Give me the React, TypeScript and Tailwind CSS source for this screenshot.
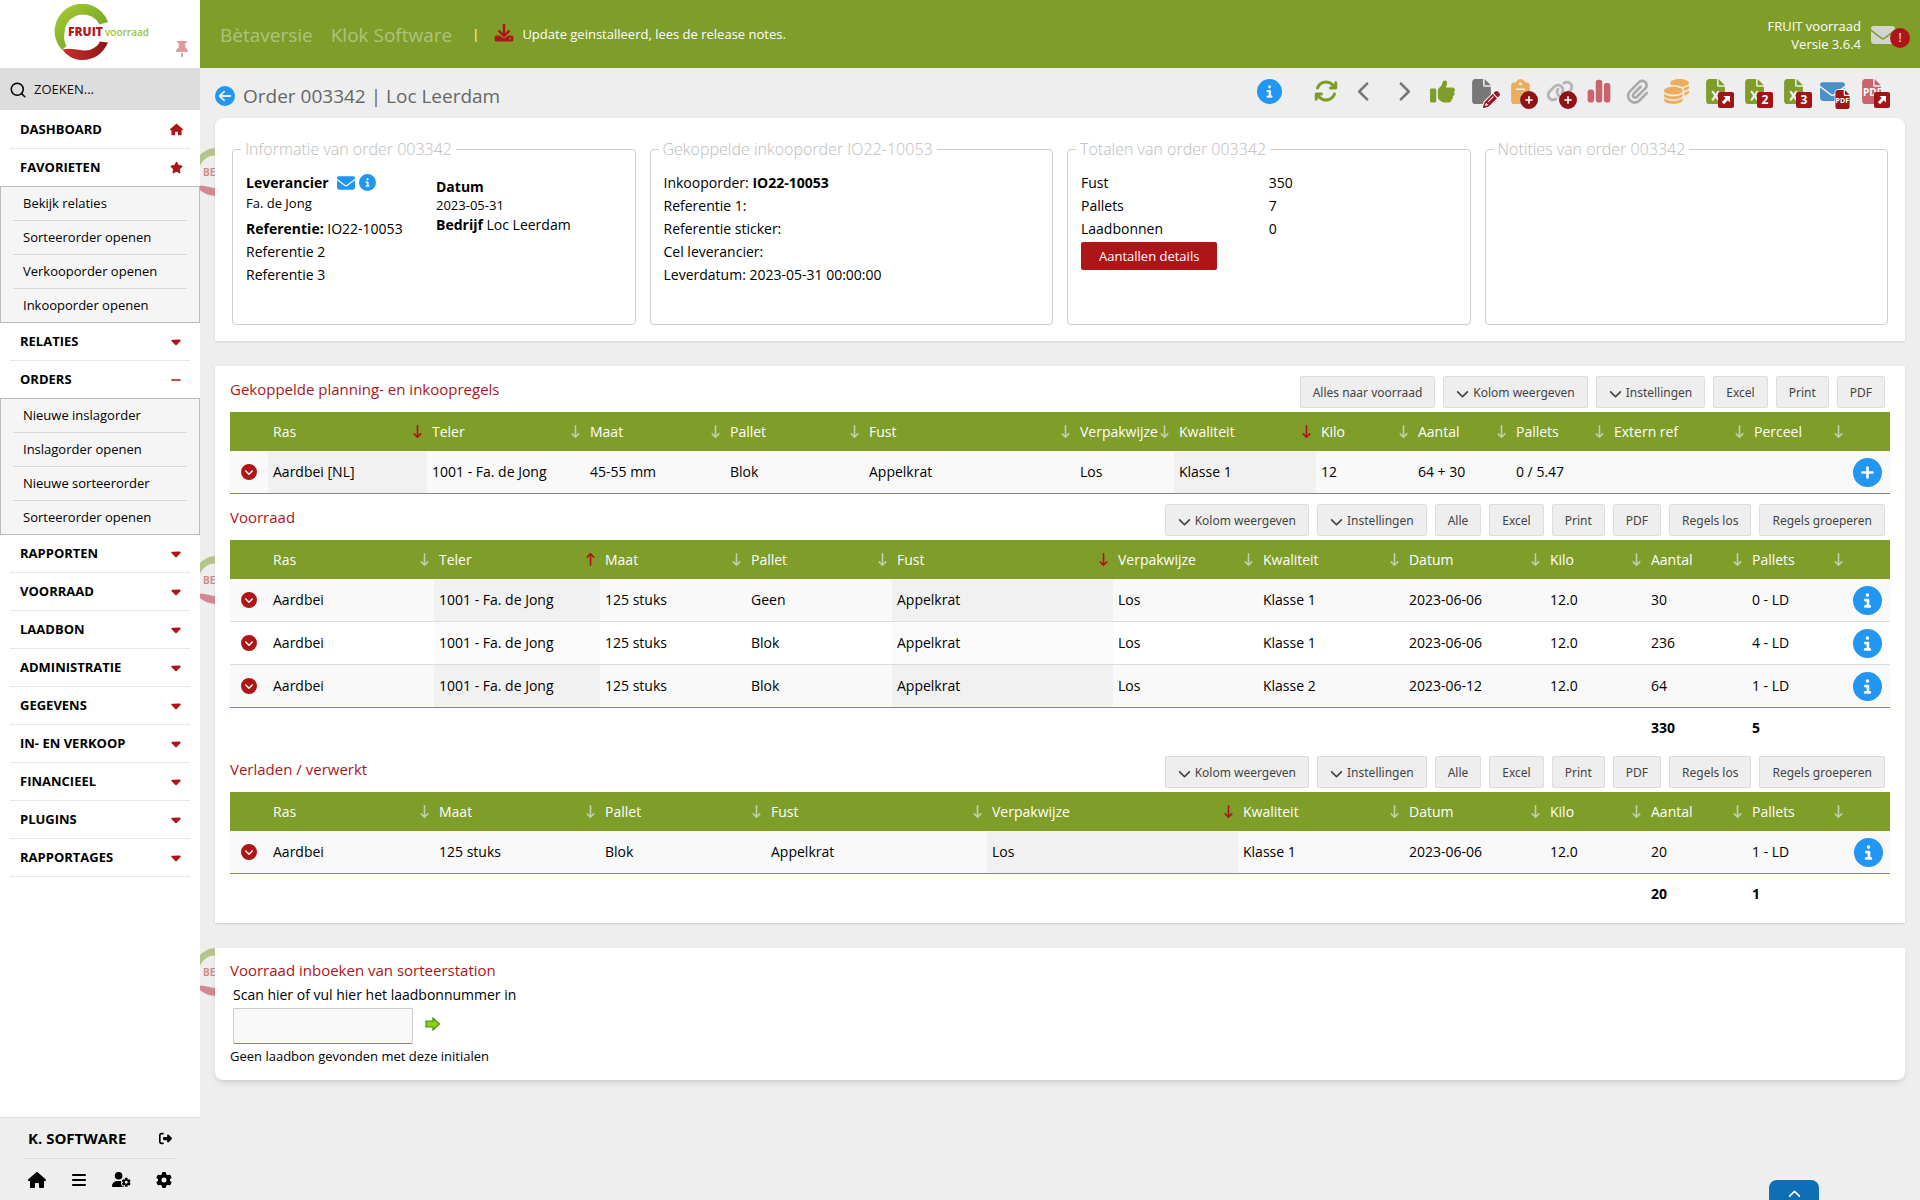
import { ReactNode } from 'react';
import clsx from 'clsx';
import { Search } from 'lucide-react';
import {
  FaArrowDownLong,
  FaArrowUpLong,
  FaArrowsRotate,
  FaBars,
  FaCaretDown,
  FaChartSimple,
  FaChevronDown,
  FaChevronLeft,
  FaChevronRight,
  FaChevronUp,
  FaCircleArrowLeft,
  FaCircleChevronDown,
  FaCircleInfo,
  FaCirclePlus,
  FaClipboard,
  FaCoins,
  FaEnvelope,
  FaFile,
  FaFileExcel,
  FaGear,
  FaHouse,
  FaLink,
  FaMinus,
  FaPaperclip,
  FaPencil,
  FaRightFromBracket,
  FaStar,
  FaThumbsUp,
  FaThumbtack,
  FaUserGear,
} from 'react-icons/fa6';

type MenuItem = {
  label: string;
  icon?: ReactNode;
  children?: string[];
};

type Column = {
  label: string;
  width: number;
  sort?: 'asc' | 'desc';
};

type OrderTableProps = {
  columns: Column[];
  rows: string[][];
  totals?: string[];
  action: 'info' | 'plus';
};

const MENU: MenuItem[] = [
  { label: 'DASHBOARD', icon: <FaHouse size={13} /> },
  {
    label: 'FAVORIETEN',
    icon: <FaStar size={13} />,
    children: ['Bekijk relaties', 'Sorteerorder openen', 'Verkooporder openen', 'Inkooporder openen'],
  },
  { label: 'RELATIES' },
  {
    label: 'ORDERS',
    icon: <FaMinus size={12} />,
    children: ['Nieuwe inslagorder', 'Inslagorder openen', 'Nieuwe sorteerorder', 'Sorteerorder openen'],
  },
  { label: 'RAPPORTEN' },
  { label: 'VOORRAAD' },
  { label: 'LAADBON' },
  { label: 'ADMINISTRATIE' },
  { label: 'GEGEVENS' },
  { label: 'IN- EN VERKOOP' },
  { label: 'FINANCIEEL' },
  { label: 'PLUGINS' },
  { label: 'RAPPORTAGES' },
];

const PLANNING_COLUMNS: Column[] = [
  { label: 'Ras', width: 159, sort: 'desc' },
  { label: 'Teler', width: 158 },
  { label: 'Maat', width: 140 },
  { label: 'Pallet', width: 139 },
  { label: 'Fust', width: 211 },
  { label: 'Verpakwijze', width: 99 },
  { label: 'Kwaliteit', width: 142, sort: 'desc' },
  { label: 'Kilo', width: 97 },
  { label: 'Aantal', width: 98 },
  { label: 'Pallets', width: 98 },
  { label: 'Extern ref', width: 140 },
  { label: 'Perceel', width: 99 },
];

const STOCK_COLUMNS: Column[] = [
  { label: 'Ras', width: 166 },
  { label: 'Teler', width: 166, sort: 'asc' },
  { label: 'Maat', width: 146 },
  { label: 'Pallet', width: 146 },
  { label: 'Fust', width: 221, sort: 'desc' },
  { label: 'Verpakwijze', width: 145 },
  { label: 'Kwaliteit', width: 146 },
  { label: 'Datum', width: 141 },
  { label: 'Kilo', width: 101 },
  { label: 'Aantal', width: 101 },
  { label: 'Pallets', width: 101 },
];

const LOADED_COLUMNS: Column[] = [
  { label: 'Ras', width: 166 },
  { label: 'Maat', width: 166 },
  { label: 'Pallet', width: 166 },
  { label: 'Fust', width: 221 },
  { label: 'Verpakwijze', width: 251, sort: 'desc' },
  { label: 'Kwaliteit', width: 166 },
  { label: 'Datum', width: 141 },
  { label: 'Kilo', width: 101 },
  { label: 'Aantal', width: 101 },
  { label: 'Pallets', width: 101 },
];

const STOCK_BUTTONS = ['Kolom weergeven', 'Instellingen', 'Alle', 'Excel', 'Print', 'PDF', 'Regels los', 'Regels groeperen'];

const Logo = () => (
  <svg width="98" height="58" viewBox="0 0 98 58" role="img" aria-label="FRUIT voorraad">
    <defs>
      <linearGradient id="leaf" x1="0" y1="0" x2="1" y2="1">
        <stop offset="0" stopColor="#a9cf35" />
        <stop offset="0.5" stopColor="#86b32a" />
        <stop offset="1" stopColor="#6f9a25" />
      </linearGradient>
      <linearGradient id="berry" x1="0" y1="0" x2="1" y2="0">
        <stop offset="0" stopColor="#c8332c" />
        <stop offset="1" stopColor="#8f1418" />
      </linearGradient>
    </defs>
    <path
      d="M8 46A27.500 27.500 0 1 1 54 18L45.500 20.500A18.500 18.500 0 0 0 11 25C9.500 32 10 38 12.500 42Z"
      fill="url(#leaf)"
    />
    <path d="M8.500 45.500C16 43.500 23 46 30 46.500C38 47 44 42 46 37.500L54 38.500C49 50 39 56.500 27 56C19 55.500 12 51 8.500 45.500Z" fill="url(#berry)" />
    <text x="14" y="32" className="font-['Open_Sans',sans-serif] text-[12px] font-extrabold" fill="#b3151b">
      FRUIT
    </text>
    <text x="51" y="32" className="font-['Open_Sans',sans-serif] text-[10px] font-semibold" fill="#9cc52f">
      voorraad
    </text>
  </svg>
);

// Faded ring that sticks out from behind a card
const BetaMark = ({ className }: { className: string }) => (
  <svg
    className={clsx('absolute -left-[23px] opacity-50', className)}
    width="48"
    height="48"
    viewBox="0 0 48 48"
    aria-hidden="true"
  >
    <path d="M4 36C-4 18 8 0 24 0C34 0 42 6 45 14L38 17C34 7 20 4 12 12C6 18 5 28 8 34Z" fill="#7e9d29" />
    <path d="M4 38C12 36 18 40 24 40C31 40 36 36 38 32L46 34C42 44 34 48 24 48C16 48 8 44 4 38Z" fill="#b5283a" />
    <text x="11" y="28" className="font-['Open_Sans',sans-serif] text-[10px] font-bold" fill="#b5283a">
      BETA
    </text>
  </svg>
);

const UpdateIcon = ({ className }: { className?: string }) => (
  <svg className={className} width="20" height="20" viewBox="0 0 20 20" aria-hidden="true">
    <path d="M3 12.500H5.500L10 15.500L14.500 12.500H17A2.500 2.500 0 0 1 19.500 15V16.500A2 2 0 0 1 17.500 18.500H2.500A2 2 0 0 1 .5 16.500V15A2.500 2.500 0 0 1 3 12.500Z" fill="currentColor" />
    <path d="M10 .8V12M4.500 7.500L10 13L15.500 7.500" fill="none" stroke="currentColor" strokeWidth="2.400" />
    <circle cx="16" cy="15.500" r=".9" fill="#7e9d29" />
  </svg>
);

const Sidebar = () => (
  <aside className="flex w-[200px] shrink-0 flex-col bg-white text-[13px]">
    <div className="relative h-[68px] pt-[4px] pl-[54px]">
      <Logo />
      <button className="absolute right-[10px] bottom-[11px] text-[#e19aa0]" aria-label="Menu vastzetten">
        <FaThumbtack size={16} />
      </button>
    </div>

    <label className="flex h-[42px] items-center gap-[7px] bg-[#ddd] px-[9px] pt-px">
      <Search size={18} strokeWidth={2} className="shrink-0" aria-hidden="true" />
      <input
        type="search"
        aria-label="Zoeken"
        placeholder="ZOEKEN..."
        className="w-full min-w-0 bg-transparent outline-none placeholder:text-[#111]"
      />
    </label>

    <nav className="pt-px">
      {MENU.map(({ label, icon, children }) => (
        <div key={label}>
          <div className="px-[10px]">
            <button
              className={clsx(
                'flex h-[38px] w-full items-center justify-between border-b pr-[7px] pl-[10px] font-bold',
                children ? 'border-transparent' : 'border-[#e8e8e8]',
              )}
            >
              {label}
              <span className="flex w-[14px] justify-center text-[#ae1518]">{icon ?? <FaCaretDown size={15} />}</span>
            </button>
          </div>
          {children && (
            <ul className="-mt-px border border-[#bbb] bg-[#f5f5f5] px-3">
              {children.map((child) => (
                <li key={child} className="border-b border-[#d9d9d9] last:border-b-0">
                  <a href="#" className="flex h-[33px] items-center pl-[10px]">
                    {child}
                  </a>
                </li>
              ))}
            </ul>
          )}
        </div>
      ))}
    </nav>

    <div className="mt-auto border-t border-[#ddd] bg-[#eee] px-[23px]">
      <div className="flex h-[41px] items-center justify-between border-b border-[#ddd] px-[5px] text-[15px] font-bold">
        K. SOFTWARE
        <button aria-label="Uitloggen">
          <FaRightFromBracket size={13} />
        </button>
      </div>
      <div className="flex h-[41px] items-center justify-between px-[5px]">
        <button aria-label="Home">
          <FaHouse size={18} />
        </button>
        <button aria-label="Menu">
          <FaBars size={16} />
        </button>
        <button aria-label="Gebruikers">
          <FaUserGear size={19} />
        </button>
        <button aria-label="Instellingen">
          <FaGear size={16} />
        </button>
      </div>
    </div>
  </aside>
);

const Header = () => (
  <header className="flex h-[68px] items-center bg-[#7e9d29] pt-[2px] pr-[10px] pl-5 text-[13px] text-white">
    <div className="flex items-center gap-[18px] text-[19px] text-white/40">
      <span>Bètaversie</span>
      <span>Klok Software</span>
    </div>
    <span className="ml-5">|</span>
    <UpdateIcon className="mb-1 ml-[15px] text-[#ae1518]" />
    <a href="#" className="ml-2">
      Update geinstalleerd, lees de release notes.
    </a>
    <div className="ml-auto text-right leading-[18px]">
      <p>FRUIT voorraad</p>
      <p>Versie 3.6.4</p>
    </div>
    <button className="relative ml-[10px] w-[39px] text-[#d3d3d3]" aria-label="Berichten">
      <FaEnvelope size={24} />
      <span className="absolute top-[5px] right-0 flex size-5 items-center justify-center rounded-full bg-[#ae1518] text-[12px] text-white">
        !
      </span>
    </button>
  </header>
);

const ToolButton = ({ label, className, children }: { label: string; className?: string; children: ReactNode }) => (
  <button aria-label={label} className={clsx('relative flex h-[26px] w-[39px] items-center justify-center', className)}>
    {children}
  </button>
);

const SquareBadge = ({ children }: { children: ReactNode }) => (
  <span className="absolute top-[14px] right-[1px] flex size-4 items-center justify-center rounded-xs bg-[#a01416] text-[12px] leading-none font-bold text-white">
    {children}
  </span>
);

const PlusBadge = () => (
  <span className="absolute top-[13px] right-[2px] flex size-[18px] items-center justify-center rounded-full bg-white">
    <FaCirclePlus size={18} className="text-[#8f1418]" />
  </span>
);

const DiagonalArrow = () => (
  <svg width="10" height="10" viewBox="0 0 10 10" fill="currentColor" aria-hidden="true">
    <path d="M2.500 1H9V7.500L6.800 5.300L3 9.200L.9 7.100L4.700 3.200Z" />
  </svg>
);

const Toolbar = () => (
  <div className="flex items-center pb-1">
    <ToolButton label="Informatie" className="mr-[17px] text-[#2196f3]">
      <FaCircleInfo size={25} />
    </ToolButton>
    <ToolButton label="Verversen" className="text-[#7e9d29]">
      <FaArrowsRotate size={24} />
    </ToolButton>
    <ToolButton label="Vorige" className="text-[#777]">
      <FaChevronLeft size={21} />
    </ToolButton>
    <ToolButton label="Volgende" className="text-[#777]">
      <FaChevronRight size={21} />
    </ToolButton>
    <ToolButton label="Goedkeuren" className="text-[#7e9d29]">
      <FaThumbsUp size={25} />
    </ToolButton>
    <ToolButton label="Bewerken" className="text-[#777]">
      <FaFile size={25} />
      <FaPencil
        size={17}
        className="absolute top-[13px] right-[1px] overflow-visible fill-[#a01426] stroke-white [stroke-width:60px] [paint-order:stroke]"
      />
    </ToolButton>
    <ToolButton label="Klembord" className="text-[#ecae5c]">
      <FaClipboard size={25} />
      <PlusBadge />
    </ToolButton>
    <ToolButton label="Koppelen" className="text-[#b5b5b5]">
      <FaLink size={28} />
      <PlusBadge />
    </ToolButton>
    <ToolButton label="Statistiek" className="text-[#c9646c]">
      <FaChartSimple size={26} />
    </ToolButton>
    <ToolButton label="Bijlagen" className="text-[#aaa]">
      <FaPaperclip size={25} />
    </ToolButton>
    <ToolButton label="Kosten" className="text-[#ecae5c]">
      <FaCoins size={25} />
    </ToolButton>
    <ToolButton label="Excel openen" className="text-[#7e9d29]">
      <FaFileExcel size={25} />
      <SquareBadge>
        <DiagonalArrow />
      </SquareBadge>
    </ToolButton>
    <ToolButton label="Excel versie 2" className="text-[#7e9d29]">
      <FaFileExcel size={25} />
      <SquareBadge>2</SquareBadge>
    </ToolButton>
    <ToolButton label="Excel versie 3" className="text-[#7e9d29]">
      <FaFileExcel size={25} />
      <SquareBadge>3</SquareBadge>
    </ToolButton>
    <ToolButton label="PDF mailen" className="text-[#4a90c8]">
      <FaEnvelope size={25} />
      <FaFile
        size={19}
        className="absolute top-[12px] right-0 overflow-visible fill-[#a01416] stroke-white [stroke-width:40px] [paint-order:stroke]"
      />
      <span className="absolute top-[19px] right-[3px] text-[7px] leading-[8px] font-bold text-white">PDF</span>
    </ToolButton>
    <ToolButton label="PDF openen" className="text-[#c9646c]">
      <FaFile size={25} />
      <span className="absolute top-[8px] left-[11px] text-[10px] leading-3 font-bold text-white">PDF</span>
      <SquareBadge>
        <DiagonalArrow />
      </SquareBadge>
    </ToolButton>
  </div>
);

const InfoBox = ({ title, children }: { title: string; children?: ReactNode }) => (
  <fieldset className="h-[188px] min-w-0 rounded-sm border border-[#ccc] px-[13px]">
    <legend className="-ml-[5px] px-[4px] text-[16px] leading-6 font-light text-[#bbb]">{title}</legend>
    <div className="pt-[10px] leading-[23px]">{children}</div>
  </fieldset>
);

const InfoCard = () => (
  <section className="relative">
    <BetaMark className="top-[30px]" />
    <div className="relative grid grid-cols-4 gap-[14px] rounded-t-lg bg-white px-[17px] pt-[19px] pb-4 shadow-sm">
      <InfoBox title="Informatie van order 003342">
        <div className="flex">
          <div className="w-[190px]">
            <p className="flex items-center font-bold">
              Leverancier
              <button className="ml-2 text-[#2196f3]" aria-label="Leverancier mailen">
                <FaEnvelope size={18} />
              </button>
              <button className="ml-1 text-[#2196f3]" aria-label="Leverancier informatie">
                <FaCircleInfo size={17} />
              </button>
            </p>
            <p className="text-[13px] leading-[18px]">Fa. de Jong</p>
            <p className="pt-[5px]">
              <b>Referentie:</b> IO22-10053
            </p>
            <p>Referentie 2</p>
            <p>Referentie 3</p>
          </div>
          <div className="pt-[6px] leading-[19px]">
            <p className="font-bold">Datum</p>
            <p className="text-[13px]">2023-05-31</p>
            <p>
              <b>Bedrijf</b> Loc Leerdam
            </p>
          </div>
        </div>
      </InfoBox>
      <InfoBox title="Gekoppelde inkooporder IO22-10053">
        <p>
          Inkooporder: <b>IO22-10053</b>
        </p>
        <p>Referentie 1:</p>
        <p>Referentie sticker:</p>
        <p>Cel leverancier:</p>
        <p>Leverdatum: 2023-05-31 00:00:00</p>
      </InfoBox>
      <InfoBox title="Totalen van order 003342">
        <dl className="grid grid-cols-2">
          <dt>Fust</dt>
          <dd>350</dd>
          <dt>Pallets</dt>
          <dd>7</dd>
          <dt>Laadbonnen</dt>
          <dd>0</dd>
        </dl>
        <button className="mt-[2px] h-7 rounded-xs bg-[#ae1518] px-[18px] text-[13px] text-white">
          Aantallen details
        </button>
      </InfoBox>
      <InfoBox title="Notities van order 003342" />
    </div>
  </section>
);

const SectionHeader = ({ title, buttons }: { title: string; buttons: string[] }) => (
  <div className="flex h-[37px] items-start justify-between pr-[5px]">
    <h2 className="text-[15px] leading-7 text-[#ae1518]">{title}</h2>
    <div className="flex gap-2 pt-px">
      {buttons.map((label) => (
        <button
          key={label}
          className="flex h-8 items-center gap-1 rounded-xs border border-[#ddd] bg-[#eee] px-3 pt-[2px] font-['Noto_Sans',sans-serif] text-[12px] text-[#444]"
        >
          {(label === 'Kolom weergeven' || label === 'Instellingen') && <FaChevronDown size={13} />}
          {label}
        </button>
      ))}
    </div>
  </div>
);

const TABLE_WIDTH = 1660;

const OrderTable = ({ columns, rows, totals, action }: OrderTableProps) => (
  <table className="w-full table-fixed border-separate border-spacing-0 text-left">
    <colgroup>
      <col style={{ width: `${(38 / TABLE_WIDTH) * 100}%` }} />
      {columns.map(({ label, width }) => (
        <col key={label} style={{ width: `${(width / TABLE_WIDTH) * 100}%` }} />
      ))}
      <col style={{ width: `${(42 / TABLE_WIDTH) * 100}%` }} />
    </colgroup>
    <thead className="bg-[#7e9d29] text-white">
      <tr className="h-[39px]">
        <th />
        {columns.map(({ label, sort }) => (
          <th key={label} className="pr-[3px] pl-[5px] font-normal">
            <button className="flex w-full items-center justify-between">
              {label}
              <span className={clsx('shrink-0', sort ? 'text-[#ae1518]' : 'text-[#c5cdb0]')}>
                {sort === 'asc' ? <FaArrowUpLong size={13} /> : <FaArrowDownLong size={13} />}
              </span>
            </button>
          </th>
        ))}
        <th />
      </tr>
    </thead>
    <tbody>
      {rows.map((row, i) => {
        const border = i === rows.length - 1 ? 'border-b border-[#7e9d29]' : 'border-b border-[#ddd]';
        return (
          <tr key={i} className="h-[43px] odd:bg-[#f9f9f9] even:bg-white">
            <td className={border}>
              <button className="flex w-full justify-center text-[#ae1518]" aria-label="Uitklappen">
                <FaCircleChevronDown size={16} />
              </button>
            </td>
            {columns.map(({ label, sort }, c) => (
              <td key={label} className={clsx('px-[5px] pb-px', border, sort && (i % 2 ? 'bg-[#fafafa]' : 'bg-[#f1f1f1]'))}>
                {row[c]}
              </td>
            ))}
            <td className={border}>
              <button
                className="flex w-full justify-center pr-[2px] text-[#2196f3]"
                aria-label={action === 'info' ? 'Informatie' : 'Toevoegen'}
              >
                {action === 'info' ? <FaCircleInfo size={29} /> : <FaCirclePlus size={29} />}
              </button>
            </td>
          </tr>
        );
      })}
    </tbody>
    {totals && (
      <tfoot>
        <tr className="h-[38px] font-bold">
          <td colSpan={columns.length - 1} />
          {totals.map((total) => (
            <td key={total} className="px-[5px]">
              {total}
            </td>
          ))}
          <td />
        </tr>
      </tfoot>
    )}
  </table>
);

const TablesCard = () => (
  <section className="relative">
    <BetaMark className="top-[190px]" />
    <div className="relative flex flex-col gap-[9px] bg-white px-[15px] pt-[9px] pb-[11px] shadow-sm">
      <div>
        <SectionHeader
          title="Gekoppelde planning- en inkoopregels"
          buttons={['Alles naar voorraad', 'Kolom weergeven', 'Instellingen', 'Excel', 'Print', 'PDF']}
        />
        <OrderTable
          columns={PLANNING_COLUMNS}
          rows={[
            ['Aardbei [NL]', '1001 - Fa. de Jong', '45-55 mm', 'Blok', 'Appelkrat', 'Los', 'Klasse 1', '12', '64 + 30', '0 / 5.47'],
          ]}
          action="plus"
        />
      </div>
      <div>
        <SectionHeader title="Voorraad" buttons={STOCK_BUTTONS} />
        <OrderTable
          columns={STOCK_COLUMNS}
          rows={[
            ['Aardbei', '1001 - Fa. de Jong', '125 stuks', 'Geen', 'Appelkrat', 'Los', 'Klasse 1', '2023-06-06', '12.0', '30', '0 - LD'],
            ['Aardbei', '1001 - Fa. de Jong', '125 stuks', 'Blok', 'Appelkrat', 'Los', 'Klasse 1', '2023-06-06', '12.0', '236', '4 - LD'],
            ['Aardbei', '1001 - Fa. de Jong', '125 stuks', 'Blok', 'Appelkrat', 'Los', 'Klasse 2', '2023-06-12', '12.0', '64', '1 - LD'],
          ]}
          totals={['330', '5']}
          action="info"
        />
      </div>
      <div>
        <SectionHeader title="Verladen / verwerkt" buttons={STOCK_BUTTONS} />
        <OrderTable
          columns={LOADED_COLUMNS}
          rows={[['Aardbei', '125 stuks', 'Blok', 'Appelkrat', 'Los', 'Klasse 1', '2023-06-06', '12.0', '20', '1 - LD']]}
          totals={['20', '1']}
          action="info"
        />
      </div>
    </div>
  </section>
);

const ScanCard = () => (
  <section className="relative">
    <BetaMark className="top-0" />
    <div className="relative rounded-b-lg bg-white px-[15px] pt-[10px] pb-[14px] shadow-md">
      <h2 className="text-[15px] leading-6 text-[#ae1518]">Voorraad inboeken van sorteerstation</h2>
      <div className="pl-[3px]">
        <label htmlFor="laadbon" className="block leading-[26px]">
          Scan hier of vul hier het laadbonnummer in
        </label>
        <div className="flex items-center gap-3">
          <input
            id="laadbon"
            className="h-9 w-[180px] rounded-xs border border-[#ccc] border-b-[#7e9d29] bg-[#f9f9f9] px-2 outline-none"
          />
          <button aria-label="Zoek laadbon" className="pb-1">
            <svg width="16" height="14" viewBox="0 0 16 14" aria-hidden="true">
              <path d="M1 4H8V1L14.500 7L8 13V10H1Z" fill="#8fd014" stroke="#4f8a10" strokeWidth="1.200" />
            </svg>
          </button>
        </div>
      </div>
      <p className="pt-[2px] text-[13px] leading-5">Geen laadbon gevonden met deze initialen</p>
    </div>
  </section>
);

const App = () => {
  return (
    <div className="flex min-h-screen bg-[#eee] font-['Open_Sans',sans-serif] text-[14px] text-black">
      <Sidebar />
      <div className="min-w-0 flex-1">
        <Header />
        <main className="overflow-x-clip px-[15px]">
          <div className="flex h-[50px] items-center justify-between pr-[14px]">
            <h1 className="flex items-center gap-2 pt-[6px] text-[19px] text-[#666]">
              <a href="#" aria-label="Terug" className="text-[#2196f3]">
                <FaCircleArrowLeft size={20} />
              </a>
              Order 003342 | Loc Leerdam
            </h1>
            <Toolbar />
          </div>
          <div className="flex flex-col gap-[25px]">
            <InfoCard />
            <TablesCard />
            <ScanCard />
          </div>
        </main>
      </div>
      <button
        className="fixed right-[101px] bottom-0 flex h-5 w-[50px] justify-center rounded-t-lg bg-[#0f6fb5] pt-2 text-white"
        aria-label="Naar boven"
      >
        <FaChevronUp size={13} />
      </button>
    </div>
  );
};

export default App;
